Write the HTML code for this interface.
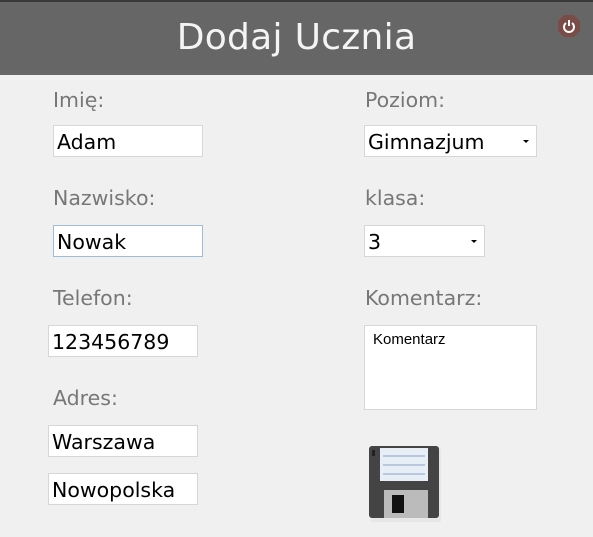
<!DOCTYPE html>
<html><head><meta charset="utf-8"><style>
*{margin:0;padding:0;box-sizing:border-box}
body{width:593px;height:537px;background:#f0f0f0;position:relative;overflow:hidden;font-family:"DejaVu Sans","Liberation Sans",sans-serif}
.hdr{position:absolute;left:0;top:0;width:593px;height:75px;background:#666;border-top:2px solid #3a3a3a}
.hdr h1{position:absolute;left:0;width:100%;top:15px;text-align:center;color:#f4f4f4;font-weight:normal;font-size:36px;letter-spacing:0.3px}
.pw{position:absolute;left:557px;top:12px;width:24px;height:24px}
.l{position:absolute;color:#777;font-size:20.5px}
.i{position:absolute;height:32px;background:#fff;border:1px solid #d6d6d6;font-size:20.5px;color:#000;padding:3px 0 0 3px;line-height:26px}
.s:after{content:"";position:absolute;right:7px;top:14px;border-left:3px solid transparent;border-right:3px solid transparent;border-top:3px solid #000}
</style></head><body>
<div class="hdr"><h1>Dodaj Ucznia</h1>
<svg class="pw" viewBox="0 0 24 24"><polygon points="7,1 17,1 23,7 23,17 17,23 7,23 1,17 1,7" fill="#7a4c48"/><path d="M9 9a5 5 0 1 0 6 0" stroke="#fff" stroke-width="2" fill="none"/><path d="M12 6v6" stroke="#fff" stroke-width="2"/></svg></div>
<div class="l" style="left:53px;top:88px">Imię:</div>
<div class="i" style="left:53px;top:125px;width:150px">Adam</div>
<div class="l" style="left:53px;top:186px">Nazwisko:</div>
<div class="i" style="left:53px;top:225px;width:150px;border-color:#9ebcd6">Nowak</div>
<div class="l" style="left:53px;top:286px">Telefon:</div>
<div class="i" style="left:48px;top:325px;width:150px">123456789</div>
<div class="l" style="left:53px;top:386px">Adres:</div>
<div class="i" style="left:48px;top:425px;width:150px">Warszawa</div>
<div class="i" style="left:48px;top:473px;width:150px">Nowopolska</div>
<div class="l" style="left:365px;top:88px">Poziom:</div>
<div class="i s" style="left:364px;top:125px;width:173px">Gimnazjum</div>
<div class="l" style="left:365px;top:186px">klasa:</div>
<div class="i s" style="left:364px;top:225px;width:121px">3</div>
<div class="l" style="left:365px;top:286px">Komentarz:</div>
<div class="i" style="left:364px;top:325px;width:173px;height:85px;font-size:15px;padding:1px 0 0 8px;font-family:'Liberation Sans',sans-serif">Komentarz</div>
<svg style="position:absolute;left:368px;top:445px" width="74" height="78" viewBox="0 0 74 78">
<rect x="3" y="3" width="70" height="74" rx="2" fill="#ddd" opacity=".5"/>
<rect x="1" y="1" width="70" height="72" rx="3" fill="#444"/>
<rect x="4" y="5" width="3" height="6" fill="#222"/>
<rect x="12" y="3" width="48" height="33" fill="#e8eef6"/>
<rect x="15" y="10" width="42" height="2" fill="#b8c8de"/><rect x="15" y="19" width="42" height="2" fill="#b8c8de"/><rect x="15" y="28" width="42" height="2" fill="#b8c8de"/>
<rect x="16" y="45" width="44" height="28" fill="#bbb"/>
<rect x="24" y="50" width="12" height="18" fill="#111"/>
</svg>
</body></html>
